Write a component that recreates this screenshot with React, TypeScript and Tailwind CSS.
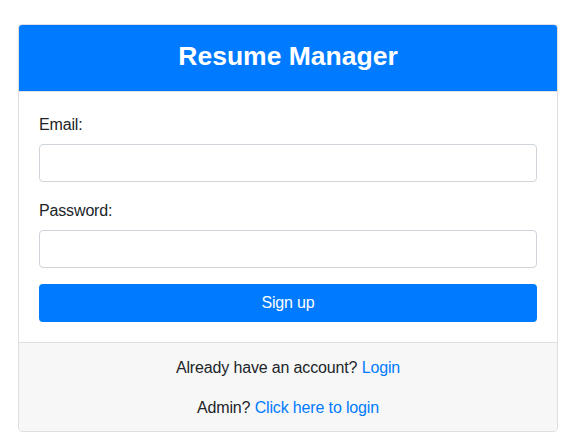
import { useState } from "react";

export default function App() {
  const [email, setEmail] = useState("");
  const [password, setPassword] = useState("");

  return (
    <div className="min-h-screen bg-white font-['Liberation_Sans',Arial,sans-serif] text-[#212529] tracking-[-0.15px]">
      <div className="ml-[18px] pt-6">
        <div className="w-[540px] rounded border border-[#dfdfdf] overflow-hidden">
          {/* Header */}
          <div className="bg-[#007bff] border-b border-[#dfdfdf] px-5 pt-[15px] pb-3 text-center">
            <h3 className="mb-[5px] text-[26.5px] leading-[33.6px] font-bold tracking-normal text-white">
              Resume Manager
            </h3>
          </div>

          {/* Body */}
          <form className="p-5" onSubmit={(e) => e.preventDefault()}>
            <div className="mb-4">
              <label className="mb-2 block pt-px text-base leading-6">Email:</label>
              <input
                type="email"
                value={email}
                onChange={(e) => setEmail(e.target.value)}
                className="-mt-px block h-[38px] w-full rounded border border-[#ced4da] px-3 text-base outline-none"
              />
            </div>
            <div className="mb-4">
              <label className="mb-2 block pt-px text-base leading-6">Password:</label>
              <input
                type="password"
                value={password}
                onChange={(e) => setPassword(e.target.value)}
                className="-mt-px block h-[38px] w-full rounded border border-[#ced4da] px-3 text-base outline-none"
              />
            </div>
            <button
              type="submit"
              className="block h-[38px] w-full rounded bg-[#007bff] pt-px text-base leading-6 text-white"
            >
              Sign up
            </button>
          </form>

          {/* Footer */}
          <div className="border-t border-[#dfdfdf] bg-[#f7f7f7] px-5 pt-[13px] pb-[11px] text-center text-base leading-6">
            <p className="mb-4">
              Already have an account?{" "}
              <a href="#" className="text-[#007bff]">
                Login
              </a>
            </p>
            <p>
              Admin?{" "}
              <a href="#" className="text-[#007bff]">
                Click here to login
              </a>
            </p>
          </div>
        </div>
      </div>
    </div>
  );
}
